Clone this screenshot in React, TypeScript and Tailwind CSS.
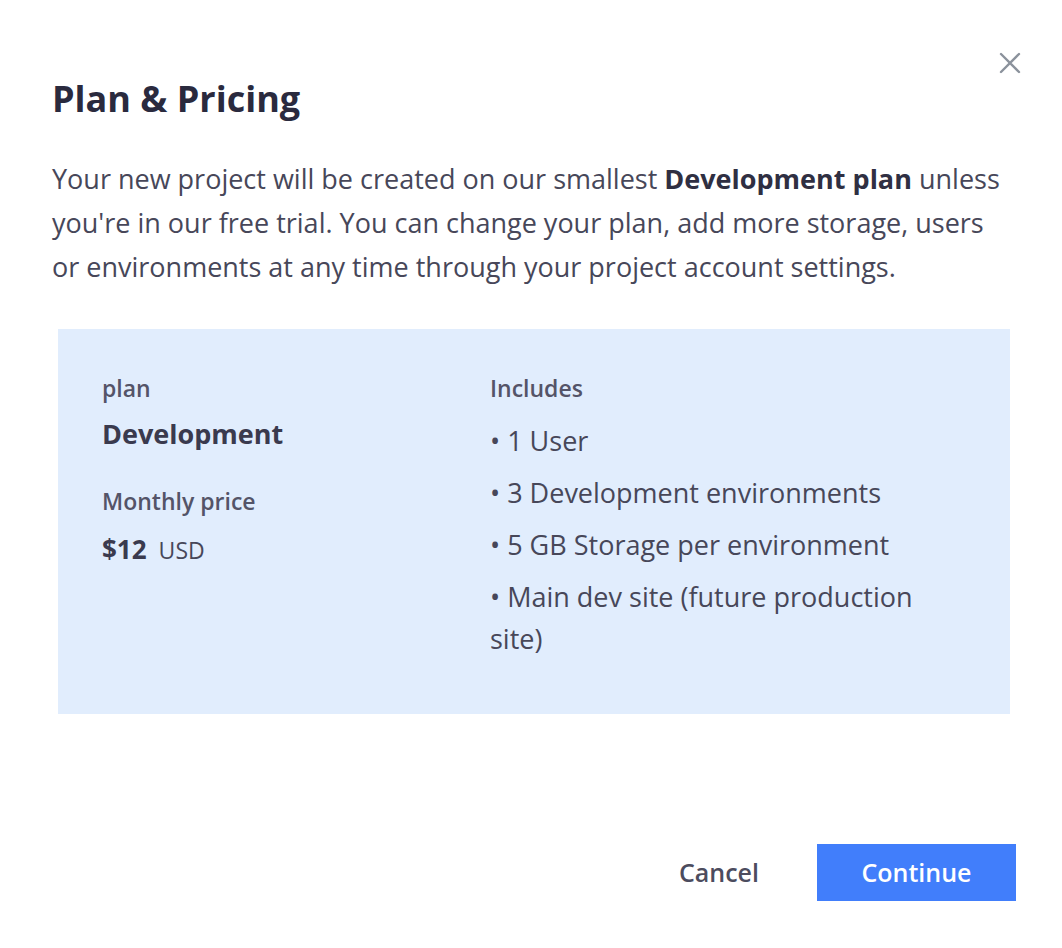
const features = [
  "1 User",
  "3 Development environments",
  "5 GB Storage per environment",
  "Main dev site (future production site)",
];

export default function App() {
  return (
    <div
      className="relative w-[1062px] h-[948px] bg-white text-[#474759]"
      style={{ fontFamily: '"Open Sans", "Noto Sans", sans-serif' }}
    >
      <button className="absolute left-[999px] top-[52px] text-[#8b929c]">
        <svg width="22" height="22" viewBox="0 0 22 22" fill="none" stroke="currentColor" strokeWidth="2.4" strokeLinecap="round">
          <path d="M2 2 L20 20 M20 2 L2 20" />
        </svg>
      </button>

      <div className="pl-[52px] pr-[52px] pt-[75px]">
        <h1 className="text-[36px] leading-[48px] font-bold text-[#2a2a3e]">
          Plan &amp; Pricing
        </h1>
        <p className="mt-[34px] w-[960px] text-[27px] leading-[44px] text-[#474759]">
          Your new project will be created on our smallest{" "}
          <span className="font-bold text-[#2f2f42]">Development plan</span>{" "}
          unless you're in our free trial. You can change your plan, add more
          storage, users or environments at any time through your project
          account settings.
        </p>
      </div>

      <div className="ml-[58px] mt-[40px] w-[952px] h-[385px] bg-[#e1edfd] pl-[44px] pt-[44px] flex">
        <div className="w-[388px]">
          <div className="text-[23px] leading-[30px] font-semibold text-[#545468]">plan</div>
          <div className="mt-[14px] text-[27px] leading-[34px] font-bold text-[#3a3a4e]">
            Development
          </div>
          <div className="mt-[35px] text-[23px] leading-[30px] font-semibold text-[#545468]">
            Monthly price
          </div>
          <div className="mt-[16px] flex items-baseline gap-[12px]">
            <span className="text-[26px] leading-[34px] font-bold text-[#3a3a4e]">$12</span>
            <span className="text-[23px] text-[#474759]">USD</span>
          </div>
        </div>
        <div className="w-[440px]">
          <div className="text-[23px] leading-[30px] font-semibold text-[#545468]">Includes</div>
          <ul className="mt-[17px] flex flex-col gap-[10px]">
            {features.map((f) => (
              <li key={f} className="text-[27px] leading-[42px] text-[#474759]">
                • {f}
              </li>
            ))}
          </ul>
        </div>
      </div>

      <div className="absolute right-[46px] top-[844px] flex items-center gap-[58px]">
        <button className="text-[25px] font-semibold text-[#4c4c5e]">Cancel</button>
        <button className="w-[199px] h-[57px] bg-[#417efb] text-white text-[25px] font-semibold">
          Continue
        </button>
      </div>
    </div>
  );
}
